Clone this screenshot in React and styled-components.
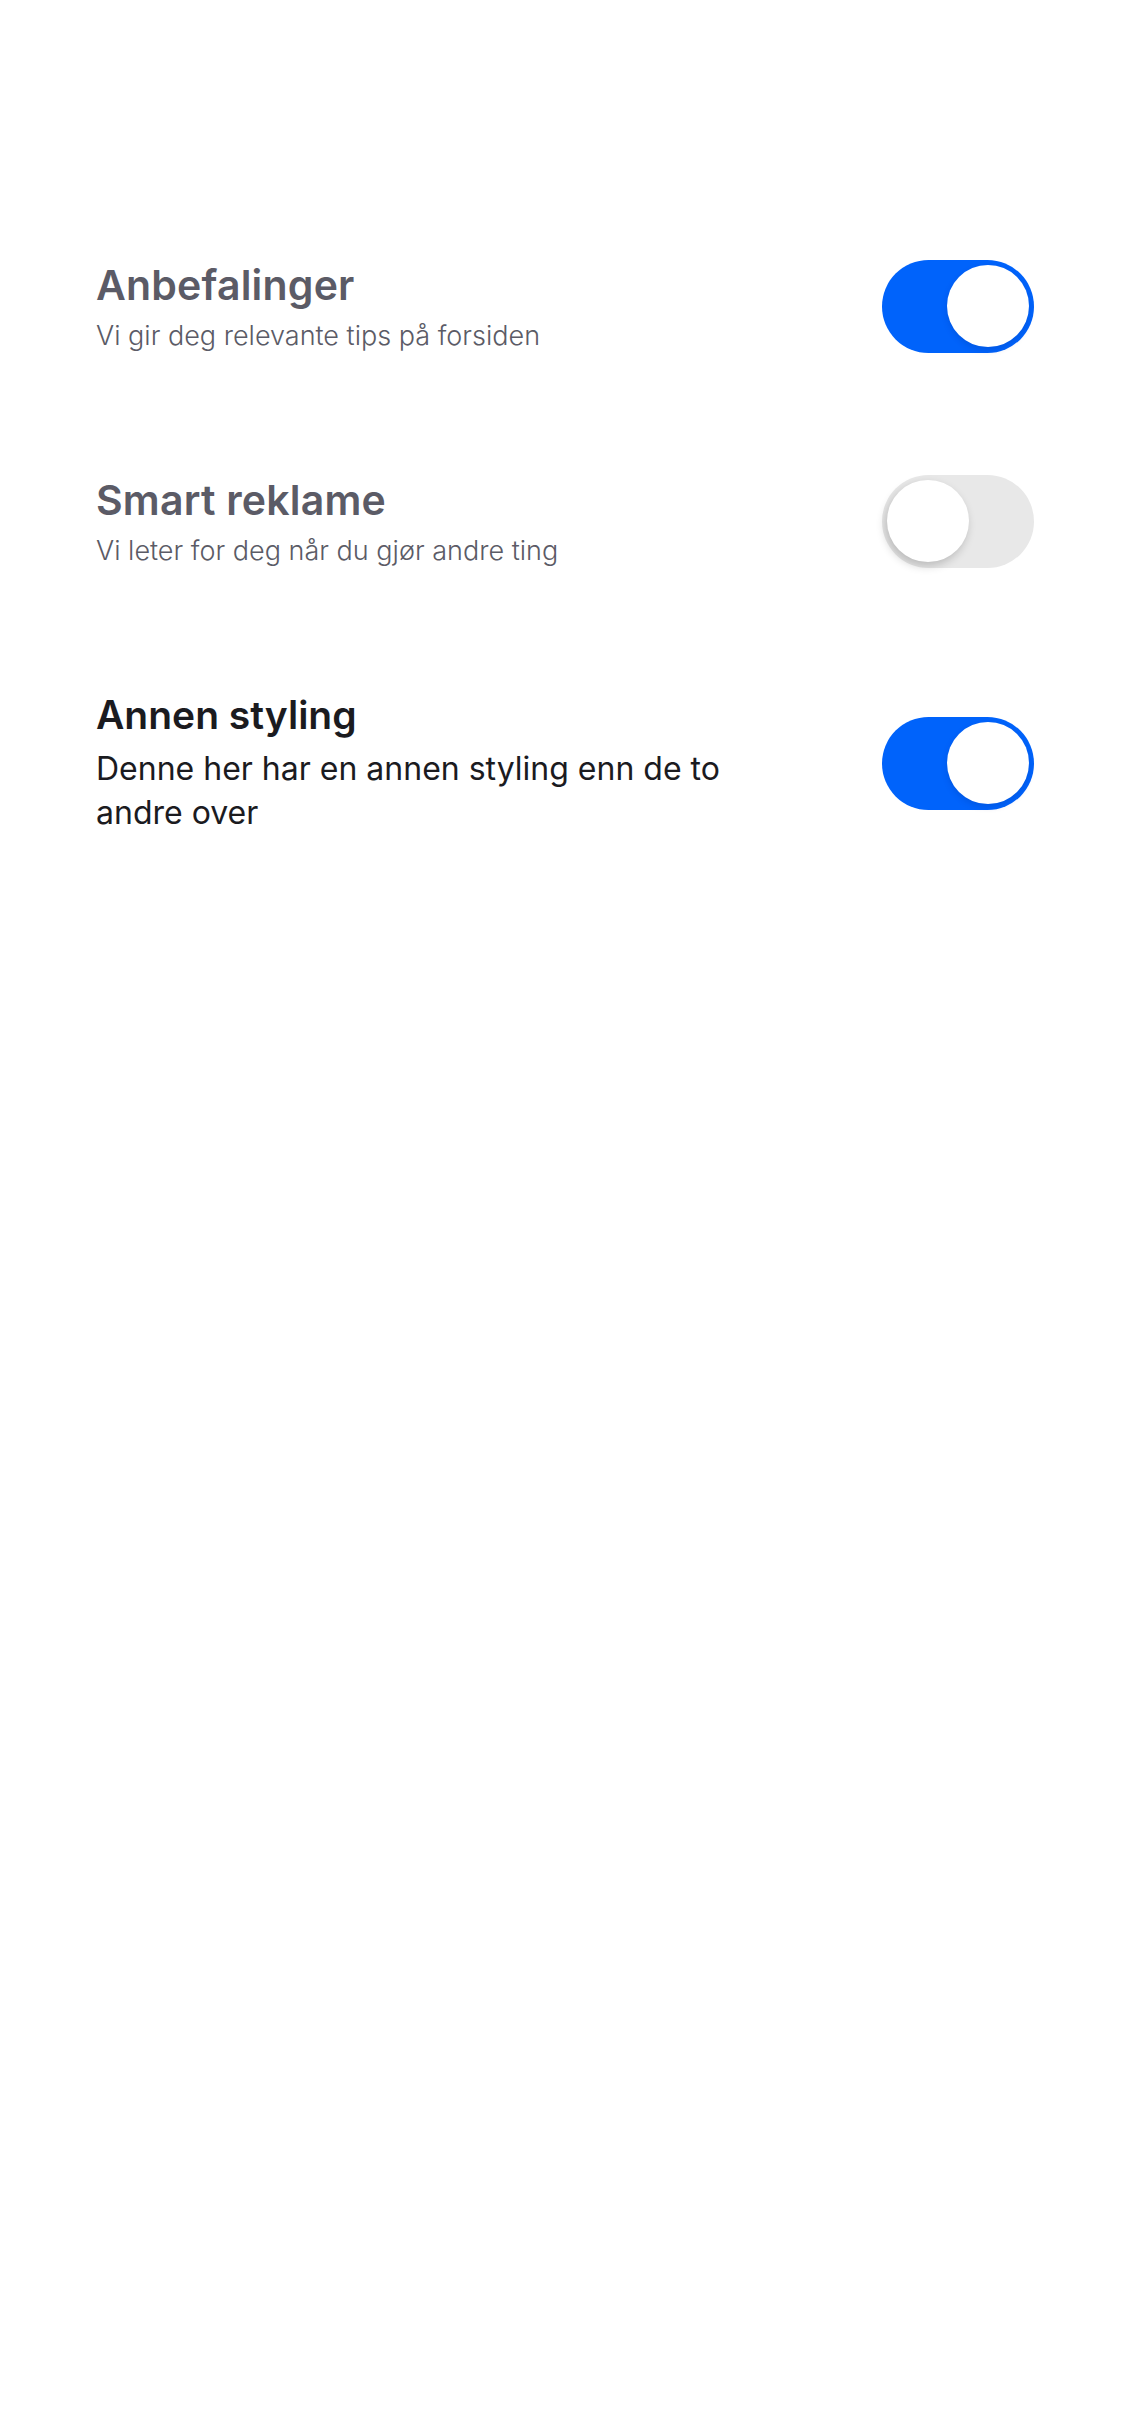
import React, { useState } from 'react';
import styled, { createGlobalStyle } from 'styled-components';

const GlobalStyle = createGlobalStyle`
  html, body {
    margin: 0;
    padding: 0;
    background: #ffffff;
  }
  body {
    font-family: Inter, "Noto Sans", "Liberation Sans", sans-serif;
  }
`;

const Page = styled.div`
  box-sizing: border-box;
  width: 100%;
  min-height: 2436px;
  background: #ffffff;
  padding: 257px 91px 0 96px;
`;

const List = styled.div`
  display: flex;
  flex-direction: column;
  gap: 117px;
`;

const Row = styled.div`
  display: flex;
  align-items: center;
  justify-content: space-between;
  margin-top: ${(p) => (p.$alt ? '4px' : '0')};
`;

const TextBlock = styled.div`
  flex: 1;
  margin-right: 100px;
  padding-top: ${(p) => (p.$alt ? '0' : '3px')};
`;

const Title = styled.div`
  font-size: ${(p) => (p.$alt ? '39px' : '41px')};
  line-height: ${(p) => (p.$alt ? '48px' : '50px')};
  font-weight: 600;
  color: ${(p) => (p.$alt ? '#1b1b1f' : '#5b5b66')};
  letter-spacing: ${(p) => (p.$alt ? '0' : '0.2px')};
`;

const Description = styled.div`
  margin-top: ${(p) => (p.$alt ? '8px' : '7px')};
  font-size: ${(p) => (p.$alt ? '32px' : '27px')};
  line-height: ${(p) => (p.$alt ? '44px' : '38px')};
  font-weight: ${(p) => (p.$alt ? 400 : 300)};
  color: ${(p) => (p.$alt ? '#1b1b1f' : '#5b5b66')};
`;

const Track = styled.button`
  position: relative;
  flex: none;
  width: 152px;
  height: 93px;
  border: none;
  padding: 0;
  border-radius: 47px;
  cursor: pointer;
  background: ${(p) => (p.$on ? '#0063fb' : '#e8e8e8')};
  outline: none;
`;

const Knob = styled.span`
  position: absolute;
  top: 5.5px;
  left: ${(p) => (p.$on ? '65px' : '5px')};
  width: 82px;
  height: 82px;
  border-radius: 50%;
  background: #ffffff;
  box-shadow: ${(p) =>
    p.$on ? '0 3px 6px rgba(0, 40, 120, 0.18)' : '-2px 4px 10px rgba(0, 0, 0, 0.2)'};
  transition: left 0.2s ease;
`;

function Toggle({ on, onChange }) {
  return (
    <Track role="switch" aria-checked={on} $on={on} onClick={() => onChange(!on)}>
      <Knob $on={on} />
    </Track>
  );
}

const settings = [
  { id: 'anbefalinger', title: 'Anbefalinger', text: 'Vi gir deg relevante tips på forsiden', on: true },
  { id: 'reklame', title: 'Smart reklame', text: 'Vi leter for deg når du gjør andre ting', on: false },
  { id: 'styling', title: 'Annen styling', text: 'Denne her har en annen styling enn de to andre over', on: true, alt: true },
];

export default function App() {
  const [values, setValues] = useState(
    Object.fromEntries(settings.map((s) => [s.id, s.on]))
  );

  return (
    <Page>
      <GlobalStyle />
      <List>
        {settings.map((s) => (
          <Row key={s.id} $alt={s.alt}>
            <TextBlock $alt={s.alt}>
              <Title $alt={s.alt}>{s.title}</Title>
              <Description $alt={s.alt}>{s.text}</Description>
            </TextBlock>
            <Toggle
              on={values[s.id]}
              onChange={(v) => setValues({ ...values, [s.id]: v })}
            />
          </Row>
        ))}
      </List>
    </Page>
  );
}
